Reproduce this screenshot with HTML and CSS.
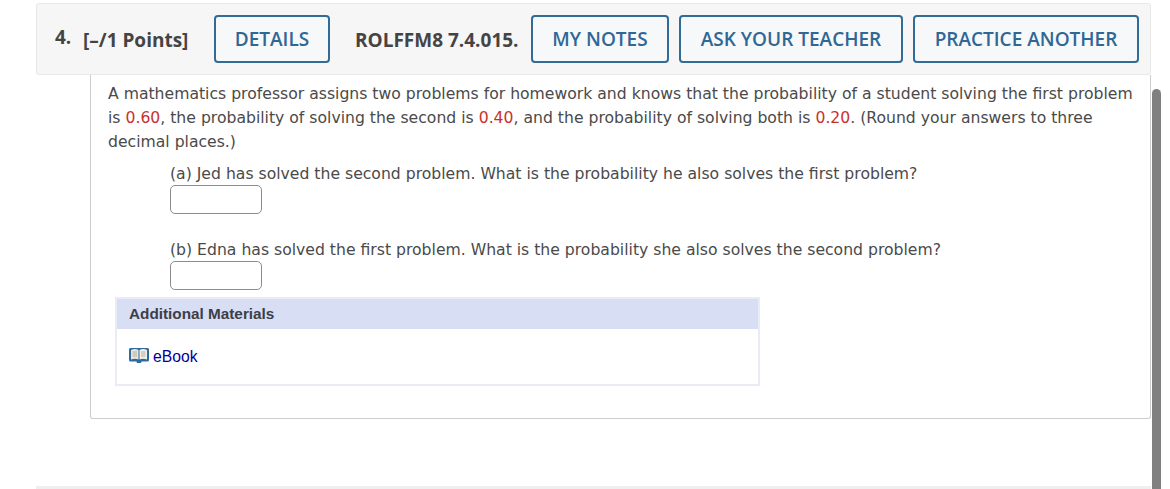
FILE: index.html
```html
<!DOCTYPE html>
<html lang="en">
<head>
<meta charset="utf-8">
<title>Question 4</title>
<link rel="stylesheet" href="styles.css">
</head>
<body>
<main class="page">
  <section class="question">
    <header class="head">
      <span class="num">4.</span>
      <span class="points">[–/1 Points]</span>
      <a class="btn btn-details">DETAILS</a>
      <span class="code">ROLFFM8 7.4.015.</span>
      <a class="btn btn-notes">MY NOTES</a>
      <a class="btn btn-ask">ASK YOUR TEACHER</a>
      <a class="btn btn-practice">PRACTICE ANOTHER</a>
    </header>
    <div class="body">
      <p class="intro">A mathematics professor assigns two problems for homework and knows that the probability of a student solving the first problem is <span class="red">0.60</span>, the probability of solving the second is <span class="red">0.40</span>, and the probability of solving both is <span class="red">0.20</span>. (Round your answers to three decimal places.)</p>
      <div class="part part-a">
        <p class="prompt">(a) Jed has solved the second problem. What is the probability he also solves the first problem?</p>
        <div class="answer"></div>
      </div>
      <div class="part part-b">
        <p class="prompt">(b) Edna has solved the first problem. What is the probability she also solves the second problem?</p>
        <div class="answer"></div>
      </div>
      <div class="materials">
        <div class="mat-head">Additional Materials</div>
        <div class="mat-body">
          <svg class="book" width="20" height="17" viewBox="0 0 20 17" aria-hidden="true">
            <path d="M0 2.500Q0 1 1.500 1H18.500Q20 1 20 2.500V13Q20 14.500 18.500 14.500H12.500L12 16H8L7.500 14.500H1.500Q0 14.500 0 13z" fill="#2e6a9e"/>
            <path d="M2 3Q6 1 9.500 3V12.500Q6 11 2 12.500z" fill="#e8e6dc"/>
            <path d="M18 3Q14 1 10.500 3V12.500Q14 11 18 12.500z" fill="#f2f0e8"/>
            <path d="M3.500 5h4.500M3.500 7h4.500M3.500 9h4.500M12 5h4.500M12 7h4.500M12 9h4.500" stroke="#b9b09c" stroke-width="1"/>
          </svg>
          <a class="ebook">eBook</a>
        </div>
      </div>
    </div>
  </section>
  <div class="next"></div>
</main>
<div class="scrollbar"></div>
</body>
</html>
```
FILE: styles.css
```css
html, body {
  margin: 0;
  padding: 0;
  background: #fff;
  overflow: hidden;
}
.page {
  width: 1115px;
  margin-left: 36px;
  padding-top: 3px;
}
.head {
  box-sizing: border-box;
  height: 72px;
  display: flex;
  align-items: center;
  background: #f6f6f6;
  border: 1px solid #e8e8e8;
  border-radius: 3px;
  font-family: "Open Sans", "Noto Sans", sans-serif;
  color: #444;
}
.num {
  margin-left: 18px;
  width: 28px;
  font-size: 19px;
  font-weight: 700;
  margin-bottom: 4px;
}
.points {
  width: 131px;
  margin-top: 2px;
  font-size: 19px;
  font-weight: 700;
}
.code {
  width: 201px;
  margin-top: 2px;
  padding-left: 25px;
  box-sizing: border-box;
  font-size: 19px;
  font-weight: 700;
}
.btn {
  box-sizing: border-box;
  height: 48px;
  display: flex;
  align-items: center;
  justify-content: center;
  border: 2px solid #336b97;
  border-radius: 4px;
  background: #f7f8f9;
  color: #2f6795;
  font-size: 19px;
  font-weight: 600;
}
.btn-details { width: 116px; }
.btn-notes { width: 138px; }
.btn-ask { width: 224px; margin-left: 10px; }
.btn-practice { width: 226px; margin-left: 10px; }
.body {
  box-sizing: border-box;
  height: 344px;
  margin-left: 54px;
  padding: 7px 12px 0 17px;
  border: 1px solid #cdcdcd;
  border-top: 0;
  border-radius: 0 0 3px 3px;
  font-family: "DejaVu Sans", Verdana, sans-serif;
  font-size: 15.650px;
  line-height: 24px;
  color: #4a4a4a;
}
p { margin: 0; }
.red { color: #c9302c; }
.part { margin-left: 62px; }
.part-a { margin-top: 8px; }
.part-b { margin-top: 24px; }
.answer {
  box-sizing: border-box;
  width: 92px;
  height: 29px;
  margin-top: -1px;
  border: 1px solid #8c8c8c;
  border-radius: 5px;
  background: #fff;
}
.materials {
  box-sizing: border-box;
  width: 645px;
  height: 89px;
  margin: 7px 0 0 7px;
  border: 2px solid #e9ecf7;
  font-family: "Liberation Sans", Arial, sans-serif;
}
.mat-head {
  height: 30px;
  line-height: 30px;
  padding-left: 12px;
  background: #d8def4;
  font-size: 15.300px;
  font-weight: 700;
  color: #3c3f48;
}
.mat-body {
  display: flex;
  align-items: center;
  gap: 4px;
  padding: 15px 0 0 12px;
}
.book { margin-top: -3px; }
.ebook {
  margin-top: 1px;
  font-size: 15.700px;
  line-height: 24px;
  color: #000099;
}
.next {
  height: 3px;
  margin-top: 67px;
  background: #efefef;
}
.scrollbar {
  position: absolute;
  left: 1152px;
  top: 89px;
  width: 9px;
  height: 400px;
  border-radius: 5px 5px 0 0;
  background: #808080;
}
```
